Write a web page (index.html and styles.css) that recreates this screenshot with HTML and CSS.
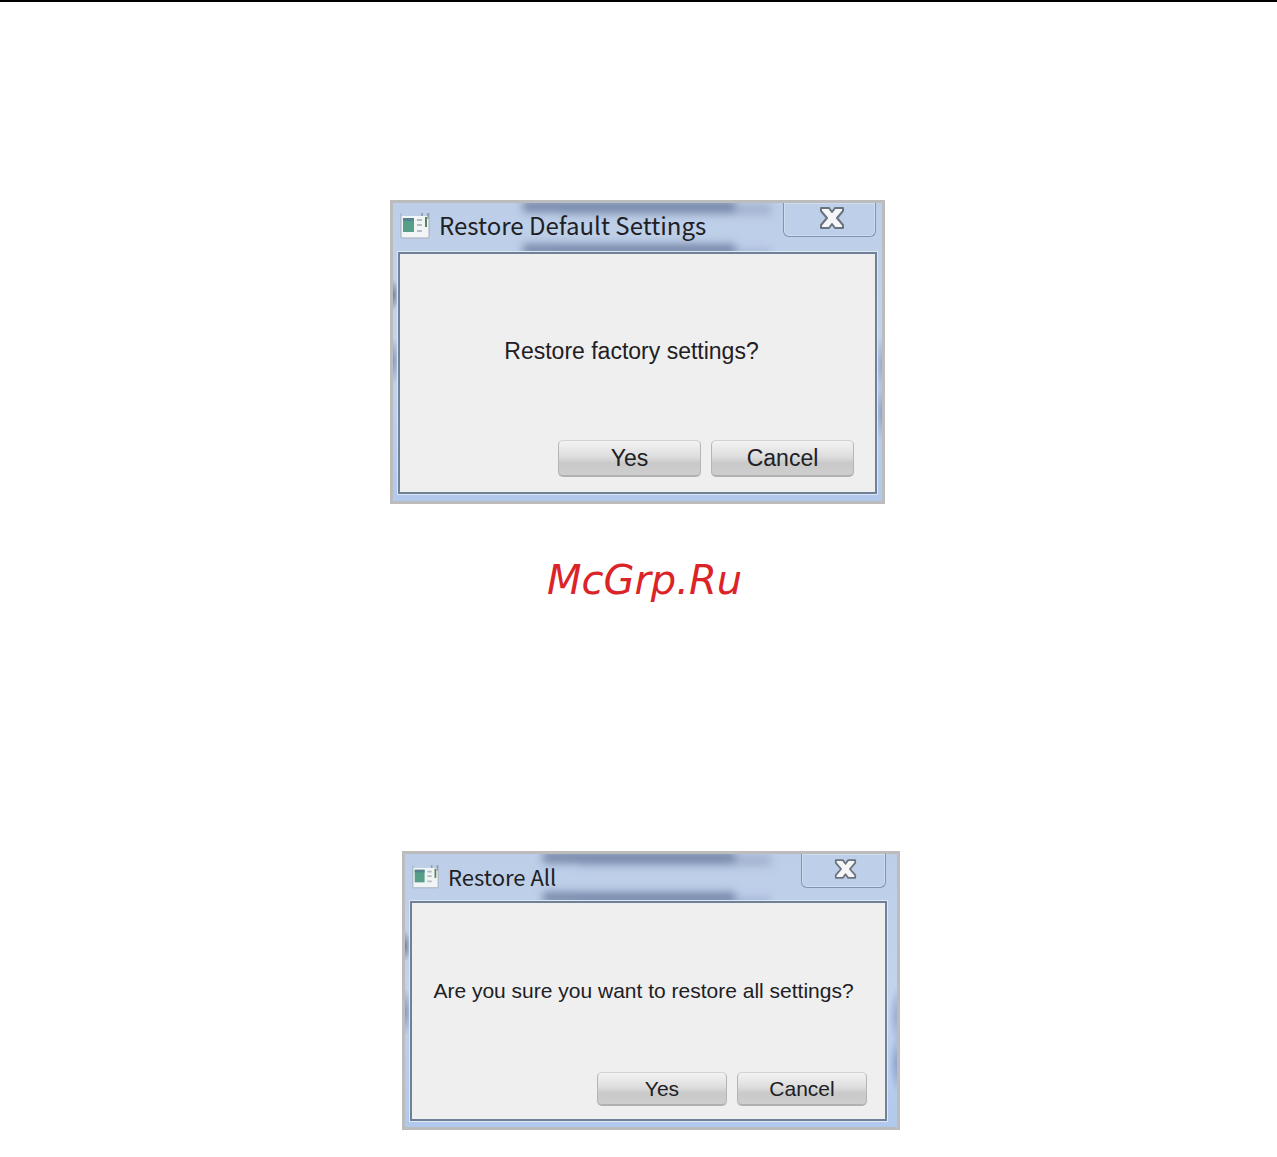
FILE: index.html
```
<!DOCTYPE html>
<html lang="en">
<head>
  <meta charset="UTF-8">
  <meta name="viewport" content="width=device-width, initial-scale=1.0">
  <title>Restore Settings</title>
  <link rel="stylesheet" href="styles.css">
</head>
<body>
  <main class="page">
    <section class="dialog" role="dialog" aria-labelledby="default-title">
      <div class="glass" aria-hidden="true"><span></span><span></span></div>
      <header class="titlebar">
        <svg class="app-icon" viewBox="0 0 30 27" aria-hidden="true">
          <path d="M1 4H29V26H1Z" fill="#f2f5f5"/>
          <path d="M1 1V26H29V1" fill="none" stroke="#a3adba"/>
          <path d="M3 6H14V20H3Z" fill="#579e88"/>
          <path d="M3 6H14V9H3Z" fill="#568290"/>
          <path d="M17 8H22M17 13H22M17 19H22" stroke="#b3bcc2" stroke-width="2"/>
          <path d="M26 5V15" stroke="#56835b" stroke-width="2"/>
          <path d="M22 1V4M28 1V7" stroke="#707b83"/>
        </svg>
        <h2 id="default-title">Restore Default Settings</h2>
        <button type="button" class="close" aria-label="Close">
          <svg viewBox="0 0 26 24" aria-hidden="true">
            <path d="M2 2H10L13 6L16 2H24V5L18 12L24 19V22H16L13 18L10 22H2V19L8 12L2 5Z" fill="#f5f6f8" stroke="#6c727c" stroke-width="2" stroke-linejoin="round"/>
          </svg>
        </button>
      </header>
      <div class="client">
        <p>Restore factory settings?</p>
        <div class="actions">
          <button type="button" class="button">Yes</button>
          <button type="button" class="button">Cancel</button>
        </div>
      </div>
    </section>

    <a class="watermark" href="#">McGrp.Ru</a>

    <section class="dialog dialog-all" role="dialog" aria-labelledby="all-title">
      <div class="glass" aria-hidden="true"><span></span><span></span></div>
      <header class="titlebar">
        <svg class="app-icon" viewBox="0 0 30 27" aria-hidden="true">
          <path d="M1 4H29V26H1Z" fill="#f2f5f5"/>
          <path d="M1 1V26H29V1" fill="none" stroke="#a3adba"/>
          <path d="M3 6H14V20H3Z" fill="#579e88"/>
          <path d="M3 6H14V9H3Z" fill="#568290"/>
          <path d="M17 8H22M17 13H22M17 19H22" stroke="#b3bcc2" stroke-width="2"/>
          <path d="M26 5V15" stroke="#56835b" stroke-width="2"/>
          <path d="M22 1V4M28 1V7" stroke="#707b83"/>
        </svg>
        <h2 id="all-title">Restore All</h2>
        <button type="button" class="close" aria-label="Close">
          <svg viewBox="0 0 26 24" aria-hidden="true">
            <path d="M2 2H10L13 6L16 2H24V5L18 12L24 19V22H16L13 18L10 22H2V19L8 12L2 5Z" fill="#f5f6f8" stroke="#6c727c" stroke-width="2" stroke-linejoin="round"/>
          </svg>
        </button>
      </header>
      <div class="client">
        <p>Are you sure you want to restore all settings?</p>
        <div class="actions">
          <button type="button" class="button">Yes</button>
          <button type="button" class="button">Cancel</button>
        </div>
      </div>
    </section>
  </main>
</body>
</html>
```
FILE: styles.css
```
* {
  box-sizing: border-box;
}
body {
  margin: 0;
  background: #fff;
  color: #202024;
  font-family: "Liberation Sans", Arial, sans-serif;
}
.page {
  display: flex;
  flex-direction: column;
  align-items: center;
  border-top: 2px solid #000;
  padding: 198px 0 27px;
}
.dialog {
  position: relative;
  width: 495px;
  max-width: 100%;
  margin-right: 2px;
  padding: 0 5px 7px;
  border: 3px solid #bcbcbc;
  background:
    radial-gradient(ellipse 6px 16px at 0 92px, #6f7f9d, transparent),
    radial-gradient(ellipse 7px 24px at 0 158px, #8799bd, transparent),
    radial-gradient(ellipse 8px 30px at 100% 162px, #98abd1, transparent),
    radial-gradient(ellipse 8px 30px at 100% 210px, #8fa3cc, transparent),
    linear-gradient(#bdcee8, #c3d3ec 50%, #b1c9ec);
}
/* blurred menu rows behind the window frame */
.glass {
  position: absolute;
  inset: 0;
  overflow: hidden;
}
.glass span {
  position: absolute;
  top: -2px;
  left: 130px;
  width: 212px;
  height: 11px;
  background: #7587a8;
  box-shadow: 36px 3px 0 #a3b3cf;
  filter: blur(4px);
}
.glass span + span {
  top: 41px;
  box-shadow: 36px 4px 0 #a9badb;
}
.titlebar {
  position: relative;
  display: flex;
  align-items: flex-start;
  height: 49px;
}
.app-icon {
  width: 30px;
  height: 27px;
  margin: 9px 9px 0 2px;
}
h2 {
  flex: 1;
  margin: 0;
  padding-top: 6px;
  font-family: "Noto Sans CJK SC", sans-serif;
  font-size: 24px;
  font-weight: 400;
  line-height: 32px;
  white-space: nowrap;
}
.close {
  display: flex;
  align-items: center;
  justify-content: center;
  width: 93px;
  height: 34px;
  margin-right: 1px;
  padding: 0 0 4px 4px;
  border: 1px solid #8093b1;
  border-top: 0;
  border-radius: 0 0 6px 6px;
  background: #bed0e9;
  box-shadow: inset 0 0 0 1px #cfddf0;
  cursor: pointer;
}
.close svg {
  width: 26px;
  height: 24px;
}
.client {
  position: relative;
  display: flex;
  flex-direction: column;
  justify-content: space-between;
  height: 242px;
  padding: 83px 21px 15px;
  border: 2px solid #708096;
  background: #efefef;
  box-shadow: 0 0 0 1px #dce7f5;
}
.client p {
  margin: 0 12px 0 0;
  font-size: 23px;
  line-height: 28px;
  text-align: center;
  white-space: nowrap;
}
.actions {
  display: flex;
  justify-content: flex-end;
  gap: 10px;
}
.button {
  width: 143px;
  height: 37px;
  padding: 0;
  border: 1px solid #b5b5b5;
  border-top-color: #d2d2d2;
  border-bottom: 2px solid #b0b0b0;
  border-radius: 5px;
  background: linear-gradient(#f3f3f3, #dedede 45%, #c9c9c9 65%, #cecece);
  color: inherit;
  font: 23px "Liberation Sans", Arial, sans-serif;
  cursor: pointer;
}
.watermark {
  margin: 52px 0 0 12px;
  color: #db2428;
  font: italic 40px/48px "DejaVu Sans", sans-serif;
  text-decoration: none;
}

.dialog-all {
  width: 498px;
  margin: 247px 0 0 25px;
  padding: 0 10px 6px 5px;
}
.dialog-all .glass span {
  left: 138px;
  width: 192px;
}
.dialog-all .glass span + span {
  top: 38px;
}
.dialog-all .titlebar {
  height: 47px;
}
.dialog-all .app-icon {
  width: 27px;
  height: 25px;
  margin: 10px 9px 0 2px;
}
.dialog-all h2 {
  font-size: 22px;
}
.dialog-all .close {
  width: 85px;
}
.dialog-all .close svg {
  width: 23px;
  height: 22px;
}
.dialog-all .client {
  height: 220px;
  padding: 74px 18px 13px;
}
.dialog-all p {
  margin-right: 10px;
  font-size: 21px;
}
.dialog-all .button {
  width: 130px;
  height: 34px;
  font-size: 21px;
}
```
